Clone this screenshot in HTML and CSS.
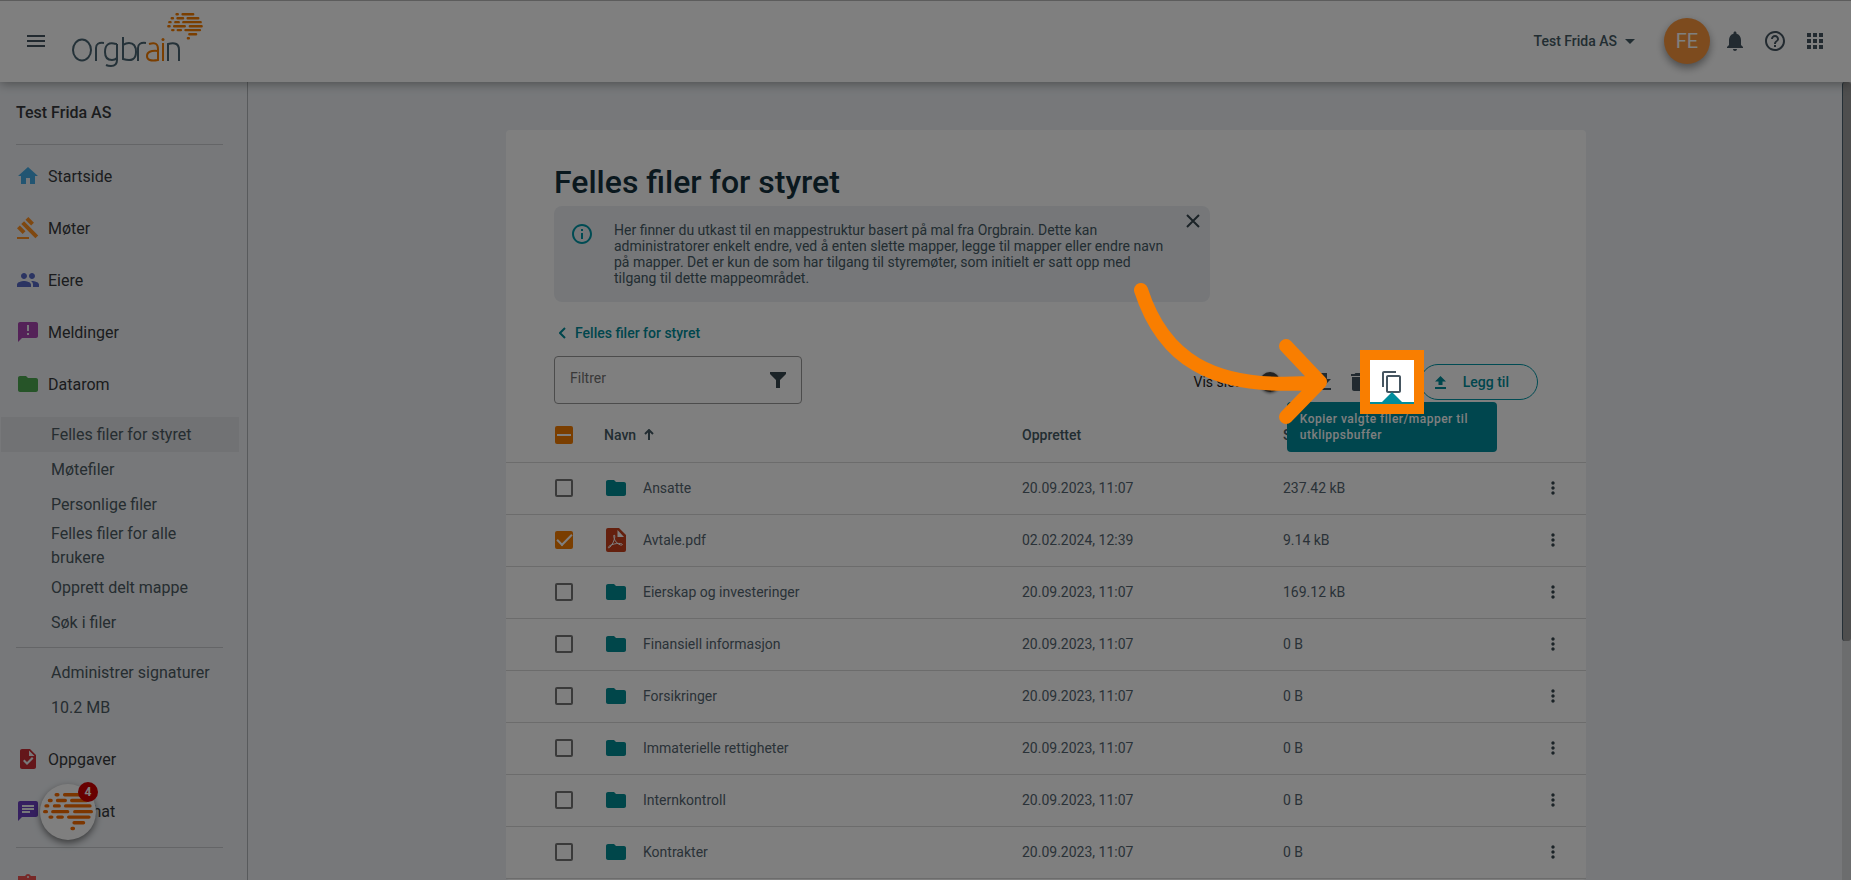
FILE: index.html
```html
<!DOCTYPE html>
<html lang="no">
<head>
<meta charset="utf-8">
<title>Felles filer for styret</title>
<link rel="stylesheet" href="styles.css">
</head>
<body>
<svg class="defs" aria-hidden="true">
  <symbol id="folder" viewBox="0 0 24 24"><path d="M10 4H4c-1.100 0-1.990.9-1.990 2L2 18c0 1.100.9 2 2 2h16c1.100 0 2-.9 2-2V8c0-1.100-.9-2-2-2h-8l-2-2z"/></symbol>
  <symbol id="more" viewBox="0 0 24 24"><path d="M12 8c1.100 0 2-.9 2-2s-.9-2-2-2-2 .9-2 2 .9 2 2 2zm0 2c-1.100 0-2 .9-2 2s.9 2 2 2 2-.9 2-2-.9-2-2-2zm0 6c-1.100 0-2 .9-2 2s.9 2 2 2 2-.9 2-2-.9-2-2-2z"/></symbol>
  <symbol id="brain" viewBox="0 0 148 112"><g fill="none" stroke="currentColor" stroke-width="10" stroke-linecap="round"><path d="M39 5h5M64 5h44M19 22h5M43 22h23M85 22h44M9 38h5M34 38h14M67 38h72M5 55h5M29 55h44M94 55h49M21 71h5M44 71h13M76 71h60M92 88h28M86 105h4"/></g></symbol>
</svg>
<header class="topbar">
  <button class="icon-btn menu-btn" aria-label="Meny"><svg class="icon" viewBox="0 0 24 24"><path d="M3 18h18v-2H3v2zm0-5h18v-2H3v2zm0-7v2h18V6H3z"/></svg></button>
  <a class="logo" href="#"><svg width="136" height="56" viewBox="0 0 136 56" role="img" aria-label="Orgbrain">
    <g class="logo-dark">
      <ellipse cx="12" cy="37" rx="9" ry="10.500"/><path d="M26 48V35q0-6 8-5"/><path d="M46 31q-11-3-11 8 0 8 7 8 3 0 5-2M47 31v16q0 6-6 6-3 0-5-1M46 31h1"/>
      <path d="M53 24v22q13 4 13-7 0-9-7-9-3 0-6 2"/><path d="M68 48V35q0-6 8-5"/><path d="M98 48V31q11-3 11 6v11"/>
    </g>
    <g class="logo-accent"><path d="M79 31q9-3 9 5v11q-11 2-11-4 0-6 11-5M93 30v18"/><circle class="dot" cx="93" cy="26.500" r="1.500"/></g>
    <svg class="logo-brain" x="97" y="0" width="36" height="27"><use href="#brain"/></svg>
  </svg></a>
  <div class="top-actions">
    <button class="company">Test Frida AS <svg width="10" height="5" viewBox="0 0 10 5"><path d="M0 0h10L5 5z"/></svg></button>
    <button class="avatar">FE</button>
    <button class="icon-btn" aria-label="Varsler"><svg class="icon" viewBox="0 0 24 24"><path d="M12 22c1.100 0 2-.9 2-2h-4c0 1.100.89 2 2 2zm6-6v-5c0-3.070-1.640-5.640-4.500-6.320V4c0-.83-.67-1.500-1.500-1.500s-1.500.67-1.500 1.500v.68C7.630 5.360 6 7.920 6 11v5l-2 2v1h16v-1l-2-2z"/></svg></button>
    <button class="icon-btn" aria-label="Hjelp"><svg class="icon" viewBox="0 0 24 24"><path d="M11 18h2v-2h-2v2zm1-16C6.480 2 2 6.480 2 12s4.480 10 10 10 10-4.480 10-10S17.520 2 12 2zm0 18c-4.410 0-8-3.590-8-8s3.590-8 8-8 8 3.590 8 8-3.590 8-8 8zm0-14c-2.210 0-4 1.790-4 4h2c0-1.100.9-2 2-2s2 .9 2 2c0 2-3 1.750-3 5h2c0-2.250 3-2.500 3-5 0-2.210-1.790-4-4-4z"/></svg></button>
    <button class="icon-btn" aria-label="Apper"><svg class="icon" viewBox="0 0 24 24"><path d="M4 8h4V4H4v4zm6 12h4v-4h-4v4zm-6 0h4v-4H4v4zm0-6h4v-4H4v4zm6 0h4v-4h-4v4zm6-10v4h4V4h-4zm-6 4h4V4h-4v4zm6 6h4v-4h-4v4zm0 6h4v-4h-4v4z"/></svg></button>
  </div>
</header>
<div class="shell">
  <nav class="sidebar">
    <h2 class="org">Test Frida AS</h2>
    <hr>
    <a class="nav-item" href="#"><svg class="icon home" viewBox="0 0 24 24"><path d="M10 20v-6h4v6h5v-8h3L12 3 2 12h3v8z"/></svg>Startside</a>
    <a class="nav-item" href="#"><svg class="icon gavel" viewBox="0 0 24 24"><path d="M1 21h12v2H1zM5.245 8.070l2.830-2.827 14.140 14.142-2.828 2.828zM12.317 1l5.657 5.656-2.830 2.830-5.654-5.660zM3.825 9.485l5.657 5.657-2.828 2.828-5.657-5.657z"/></svg>Møter</a>
    <a class="nav-item" href="#"><svg class="icon people" viewBox="0 0 24 24"><path d="M16 11c1.660 0 2.990-1.340 2.990-3S17.660 5 16 5s-3 1.340-3 3 1.340 3 3 3zm-8 0c1.660 0 2.990-1.340 2.990-3S9.660 5 8 5 5 6.340 5 8s1.340 3 3 3zm0 2c-2.330 0-7 1.170-7 3.500V19h14v-2.500c0-2.330-4.670-3.500-7-3.500zm8 0c-.29 0-.62.020-.97.050 1.160.84 1.970 1.970 1.970 3.450V19h6v-2.500c0-2.330-4.670-3.500-7-3.500z"/></svg>Eiere</a>
    <a class="nav-item" href="#"><svg class="icon message" viewBox="0 0 24 24"><path d="M20 2H4c-1.100 0-1.990.9-1.990 2L2 22l4-4h14c1.100 0 2-.9 2-2V4c0-1.100-.9-2-2-2zm-7 13h-2v-2h2v2zm0-4h-2V5h2v6z"/></svg>Meldinger</a>
    <a class="nav-item" href="#"><svg class="icon data"><use href="#folder"/></svg>Datarom</a>
    <div class="subnav">
      <a class="active" href="#">Felles filer for styret</a>
      <a href="#">Møtefiler</a>
      <a href="#">Personlige filer</a>
      <a class="two-line" href="#">Felles filer for alle brukere</a>
      <a href="#">Opprett delt mappe</a>
      <a href="#">Søk i filer</a>
      <hr>
      <a href="#">Administrer signaturer</a>
      <a href="#">10.2 MB</a>
    </div>
    <a class="nav-item" href="#"><svg class="icon task" viewBox="0 0 24 24"><path d="M14 2H6c-1.100 0-2 .9-2 2v16c0 1.100.9 2 2 2h12c1.100 0 2-.9 2-2V8l-6-6zm-3 16l-4-4 1.500-1.500 2.500 2.500 5-5L17.500 11.500 11 18zM13 9V3.500L18.500 9H13z"/></svg>Oppgaver</a>
    <a class="nav-item" href="#"><svg class="icon chat" viewBox="0 0 24 24"><path d="M20 2H4c-1.100 0-1.990.9-1.990 2L2 22l4-4h14c1.100 0 2-.9 2-2V4c0-1.100-.9-2-2-2zM6 9h12v2H6V9zm8 5H6v-2h8v2zm4-6H6V6h12v2z"/></svg>Styrechat</a>
    <hr class="section-end">
    <a class="nav-item last" href="#" aria-label="Administrasjon"><svg class="icon clip" viewBox="0 0 24 24"><path d="M19 3h-4.180C14.400 1.840 13.300 1 12 1s-2.400.84-2.820 2H2v18h18V3h-1zm-7 0a1 1 0 110 2 1 1 0 010-2z"/></svg></a>
  </nav>
  <main class="content">
    <section class="card">
      <div class="card-head">
        <h1>Felles filer for styret</h1>
        <div class="notice">
          <svg class="icon" viewBox="0 0 24 24"><path d="M11 7h2v2h-2zm0 4h2v6h-2zm1-9C6.480 2 2 6.480 2 12s4.480 10 10 10 10-4.480 10-10S17.520 2 12 2zm0 18c-4.410 0-8-3.590-8-8s3.590-8 8-8 8 3.590 8 8-3.590 8-8 8z"/></svg>
          <p>Her finner du utkast til en mappestruktur basert på mal fra Orgbrain. Dette kan administratorer enkelt endre, ved å enten slette mapper, legge til mapper eller endre navn på mapper. Det er kun de som har tilgang til styremøter, som initielt er satt opp med tilgang til dette mappeområdet.</p>
          <button class="close" aria-label="Lukk"><svg width="14" height="14" viewBox="0 0 14 14"><path d="M1 1l12 12M13 1L1 13"/></svg></button>
        </div>
        <a class="crumb" href="#"><svg width="7" height="12" viewBox="0 0 7 12"><path d="M6 1L1 6l5 5"/></svg>Felles filer for styret</a>
        <div class="toolbar">
          <label class="filter"><input type="text" placeholder="Filtrer" aria-label="Filtrer"><svg width="16" height="16" viewBox="0 0 16 16"><path d="M0 0h16v2l-6 6v8H6V8L0 2z"/></svg></label>
          <div class="tools">
            <label class="switch">Vis slettet <input type="checkbox" role="switch"></label>
            <button class="icon-btn" aria-label="Last ned"><svg class="icon" viewBox="0 0 24 24"><path d="M19 9h-4V3H9v6H5l7 7 7-7zM5 18v2h14v-2H5z"/></svg></button>
            <button class="icon-btn" aria-label="Slett"><svg class="icon" viewBox="0 0 24 24"><path d="M6 19c0 1.100.9 2 2 2h8c1.100 0 2-.9 2-2V7H6v12zM19 4h-3.500l-1-1h-5l-1 1H5v2h14V4z"/></svg></button>
            <div class="copy-wrap">
              <button class="icon-btn" aria-label="Kopier"><svg class="icon" viewBox="0 0 24 24"><path d="M16 1H4c-1.100 0-2 .9-2 2v14h2V3h12V1zm3 4H8c-1.100 0-2 .9-2 2v14c0 1.100.9 2 2 2h11c1.100 0 2-.9 2-2V7c0-1.100-.9-2-2-2zm0 16H8V7h11v14z"/></svg></button>
              <div class="tooltip" role="tooltip">Kopier valgte filer/mapper til utklippsbuffer</div>
              <div class="spotlight"></div>
              <svg class="arrow" width="200" height="150" viewBox="0 0 200 150"><path d="M11 7C32 72 78 110 190 99M156 63L190 99 156 134"/></svg>
            </div>
            <button class="add"><svg width="11" height="13" viewBox="0 0 11 13"><path d="M3.500 9h4V5.500H11L5.500 0 0 5.500h3.500zM0 11h11v2H0z"/></svg>Legg til</button>
          </div>
        </div>
      </div>
      <table class="files">
        <colgroup><col class="c-check"><col class="c-icon"><col class="c-name"><col class="c-date"><col class="c-size"><col class="c-more"></colgroup>
        <thead><tr><th><input class="box mixed" type="checkbox" aria-label="Velg alle"></th><th colspan="2" class="navn">Navn <svg width="10" height="11" viewBox="0 0 10 11"><path d="M5 11V1M1 5l4-4 4 4"/></svg></th><th>Opprettet</th><th>Størrelse</th><th></th></tr></thead>
        <tbody>
          <tr><td><input class="box" type="checkbox" aria-label="Ansatte"></td><td><svg class="icon"><use href="#folder"/></svg></td><td>Ansatte</td><td>20.09.2023, 11:07</td><td>237.42 kB</td><td><button class="more" aria-label="Mer"><svg><use href="#more"/></svg></button></td></tr>
          <tr><td><input class="box" type="checkbox" checked aria-label="Avtale.pdf"></td><td><svg class="pdf" width="20" height="24" viewBox="0 0 20 24"><path d="M2 0h11l7 7v15q0 2-2 2H2q-2 0-2-2V2q0-2 2-2z"/><path class="fold" d="M11.500 2l6.500 7h-6.500z"/><path class="mark" d="M8 7c2 0 0 8-4 12-1 1.500-2 1-1.500 0 1-2 7-4 12-3.500 3 .5 2 2 0 1.500C10 15.500 7 10 8 7z"/></svg></td><td>Avtale.pdf</td><td>02.02.2024, 12:39</td><td>9.14 kB</td><td><button class="more" aria-label="Mer"><svg><use href="#more"/></svg></button></td></tr>
          <tr><td><input class="box" type="checkbox" aria-label="Eierskap og investeringer"></td><td><svg class="icon"><use href="#folder"/></svg></td><td>Eierskap og investeringer</td><td>20.09.2023, 11:07</td><td>169.12 kB</td><td><button class="more" aria-label="Mer"><svg><use href="#more"/></svg></button></td></tr>
          <tr><td><input class="box" type="checkbox" aria-label="Finansiell informasjon"></td><td><svg class="icon"><use href="#folder"/></svg></td><td>Finansiell informasjon</td><td>20.09.2023, 11:07</td><td>0 B</td><td><button class="more" aria-label="Mer"><svg><use href="#more"/></svg></button></td></tr>
          <tr><td><input class="box" type="checkbox" aria-label="Forsikringer"></td><td><svg class="icon"><use href="#folder"/></svg></td><td>Forsikringer</td><td>20.09.2023, 11:07</td><td>0 B</td><td><button class="more" aria-label="Mer"><svg><use href="#more"/></svg></button></td></tr>
          <tr><td><input class="box" type="checkbox" aria-label="Immaterielle rettigheter"></td><td><svg class="icon"><use href="#folder"/></svg></td><td>Immaterielle rettigheter</td><td>20.09.2023, 11:07</td><td>0 B</td><td><button class="more" aria-label="Mer"><svg><use href="#more"/></svg></button></td></tr>
          <tr><td><input class="box" type="checkbox" aria-label="Internkontroll"></td><td><svg class="icon"><use href="#folder"/></svg></td><td>Internkontroll</td><td>20.09.2023, 11:07</td><td>0 B</td><td><button class="more" aria-label="Mer"><svg><use href="#more"/></svg></button></td></tr>
          <tr><td><input class="box" type="checkbox" aria-label="Kontrakter"></td><td><svg class="icon"><use href="#folder"/></svg></td><td>Kontrakter</td><td>20.09.2023, 11:07</td><td>0 B</td><td><button class="more" aria-label="Mer"><svg><use href="#more"/></svg></button></td></tr>
        </tbody>
      </table>
    </section>
  </main>
  <div class="scrollbar"><div class="thumb"></div></div>
</div>
<button class="help-chat" aria-label="Åpne chat"><svg width="50" height="38"><use href="#brain"/></svg><span class="badge">4</span></button>
</body>
</html>
```
FILE: styles.css
```css
* { box-sizing: border-box; }
html, body { height: 100%; }
body {
  margin: 0;
  display: flex;
  flex-direction: column;
  overflow: hidden;
  background: #eef1f5;
  color: #37474f;
  font-family: Roboto, "Liberation Sans", sans-serif;
  font-size: 14px;
}
button { border: 0; padding: 0; background: none; font: inherit; color: inherit; }
a { color: inherit; text-decoration: none; }
h1, h2, p { margin: 0; }
svg { display: block; flex: none; fill: currentColor; }
.defs { position: absolute; width: 0; height: 0; }
.icon { width: 24px; height: 24px; }
.icon-btn { display: flex; color: #455560; }

.topbar {
  position: relative;
  z-index: 1;
  flex: none;
  display: flex;
  align-items: center;
  height: 82px;
  padding: 0 24px 1px;
  border-top: 1px solid #b8b8b8;
  background: #fff;
  box-shadow: 0 2px 10px rgba(0, 0, 0, .35);
}
.logo { margin-left: 22px; }
.logo-dark, .logo-accent { fill: none; stroke-width: 2; }
.logo-dark { stroke: #4a6572; }
.logo-accent { stroke: #f57c00; }
.dot { fill: #f57c00; stroke: none; }
.logo-brain { color: #f57c00; }
.top-actions { display: flex; align-items: center; gap: 16px; margin-left: auto; }
.company { display: flex; align-items: center; gap: 8px; margin-right: 13px; color: #455a64; font-weight: 500; }
.avatar {
  width: 46px;
  height: 46px;
  margin-right: -3px;
  border-radius: 50%;
  background: #fb963c;
  color: #fff;
  font-size: 20px;
  box-shadow: 0 4px 8px rgba(0, 0, 0, .4);
}
.avatar, .top-actions .icon-btn { flex: none; }

.shell { flex: 1; min-height: 0; display: flex; }
.sidebar {
  flex: none;
  width: 248px;
  overflow: hidden;
  border-right: 1px solid #b0b4b8;
  color: #37393c;
  font-size: 16px;
}
.org { padding: 20px 16px; font-size: 16px; line-height: 22px; font-weight: 500; }
hr { height: 1px; margin: 0 24px 0 16px; border: 0; background: #c8cbce; }
.org + hr { margin-bottom: 5px; }
.nav-item { display: flex; align-items: center; gap: 8px; height: 52px; padding-left: 16px; }
.home { color: #45abe5; }
.gavel { color: #ff9020; }
.people { color: #5668c4; }
.message { color: #a845b0; }
.data { color: #4ca850; }
.task { color: #c92c34; }
.chat { color: #6b3fc0; }
.clip { color: #ef5350; }
.section-end { margin-top: 10px; }
.last { height: 74px; }
.subnav { display: flex; flex-direction: column; padding: 7px 0 8px; color: #4c5a62; }
.subnav a { display: flex; align-items: center; height: 35px; margin: 0 8px 0 1px; padding-left: 50px; }
.subnav .active { background: #e2e5e8; }
.subnav .two-line { height: 48px; padding-right: 40px; line-height: 24px; }
.subnav hr { margin-top: 7px; margin-bottom: 7px; }

.content { flex: 1; padding: 48px 0 0 2px; display: flex; justify-content: center; }
.card { width: 1080px; border-radius: 4px; background: #fff; }
.card-head { padding: 32px 48px 0; }
h1 { color: #14303c; font-size: 32px; line-height: 40px; font-weight: 500; }
.notice {
  display: flex;
  gap: 20px;
  width: 656px;
  margin-top: 4px;
  padding: 16px 12px 16px 16px;
  border-radius: 8px;
  background: #eceff3;
  color: #455a64;
  line-height: 16px;
}
.notice .icon { color: #0097a7; }
.notice p { flex: 1; }
.close { align-self: flex-start; margin: -8px -2px 0; }
.close path { fill: none; stroke: #37474f; stroke-width: 2; }
.crumb { display: flex; align-items: center; gap: 9px; margin: 23px 0 15px 5px; line-height: 16px; color: #008c9a; font-weight: 500; }
.crumb path { fill: none; stroke: currentColor; stroke-width: 2; }
.toolbar { display: flex; justify-content: space-between; }
.filter { display: flex; align-items: center; width: 248px; height: 48px; padding: 0 15px; border: 1px solid #999; border-radius: 4px; }
.filter input { flex: 1; min-width: 0; padding: 0 0 4px; border: 0; outline: 0; background: none; font: inherit; }
.filter input::placeholder { color: #737373; opacity: 1; }
.tools { display: flex; align-items: center; height: 52px; }
.tools .icon-btn { width: 24px; margin-right: 10px; }
.switch { display: flex; align-items: center; gap: 4px; margin-right: 32px; color: #212121; }
.switch input { appearance: none; width: 20px; height: 20px; margin: 0; border-radius: 50%; background: #444; box-shadow: 0 1px 3px #666; }
.copy-wrap { position: relative; display: flex; margin-right: 6px; }
.add { display: flex; align-items: center; gap: 17px; height: 36px; padding: 0 28px 0 14px; border: 1px solid #0097a7; border-radius: 18px; color: #008c9a; font-weight: 500; }
.tooltip {
  position: absolute;
  z-index: 2;
  top: 32px;
  left: -93px;
  width: 210px;
  padding: 9px 13px;
  border-radius: 4px;
  background: #008c9c;
  color: #fff;
  font-size: 12px;
  font-weight: 500;
  line-height: 16px;
  letter-spacing: 0.5px;
}
.tooltip::before {
  content: "";
  position: absolute;
  top: -10px;
  left: 95px;
  border: 10px solid transparent;
  border-top: 0;
  border-bottom-color: #008c9c;
}
.spotlight {
  position: absolute;
  z-index: 8;
  top: -20px;
  left: -20px;
  width: 64px;
  height: 64px;
  border: 10px solid #f97e00;
  box-shadow: 0 0 0 2000px rgba(0, 0, 0, .5);
}
.arrow { position: absolute; z-index: 9; top: -87px; left: -250px; overflow: visible; fill: none; stroke: #f97e00; stroke-width: 14; stroke-linecap: round; stroke-linejoin: round; }

.files { width: 100%; border-collapse: collapse; table-layout: fixed; color: #546570; }
.files th, .files td { height: 52px; padding: 0; text-align: left; border-bottom: 1px solid #d8d8d8; }
.files th { height: 54px; color: #455a64; font-weight: 500; }
.files .icon { color: #008c94; }
.c-check { width: 98px; }
.c-icon { width: 39px; }
.c-date { width: 261px; }
.c-size { width: 260px; }
.c-more { width: 43px; }
.box { appearance: none; display: flex; justify-content: center; align-items: center; width: 18px; height: 18px; margin: 0 0 0 49px; border: 2px solid #757575; border-radius: 2px; }
.box:checked, .mixed { border: 0; background: #f57c00; }
.box:checked::after { content: ""; width: 13px; height: 6px; margin-bottom: 4px; border: solid #fff; border-width: 0 0 2px 2px; transform: rotate(-45deg); }
.mixed::after { content: ""; width: 14px; height: 2px; background: #fff; }
.navn svg { display: inline-block; margin-left: 4px; fill: none; stroke: currentColor; stroke-width: 2; }
.pdf { margin-left: 2px; color: #c8401c; }
.fold { fill: #fff; }
.mark { fill: none; stroke: #fff; stroke-width: 1; }
.more { display: flex; color: #37474f; }
.more svg { width: 20px; height: 20px; }

.scrollbar { flex: none; width: 9px; background: #d9dbdd; }
.thumb { height: 70%; border-left: 1px solid #4a5f6c; border-radius: 3px; background: #9c9c9c; }
.help-chat {
  position: absolute;
  z-index: 3;
  left: 40px;
  bottom: 40px;
  display: grid;
  place-items: center;
  width: 56px;
  height: 56px;
  border-radius: 50%;
  background: #fff;
  color: #f86d00;
  box-shadow: 0 3px 7px rgba(0, 0, 0, .5);
}
.badge { position: absolute; top: -2px; right: -2px; width: 20px; border-radius: 50%; background: #d00000; color: #fff; font-size: 12px; line-height: 20px; font-weight: 700; }
```
